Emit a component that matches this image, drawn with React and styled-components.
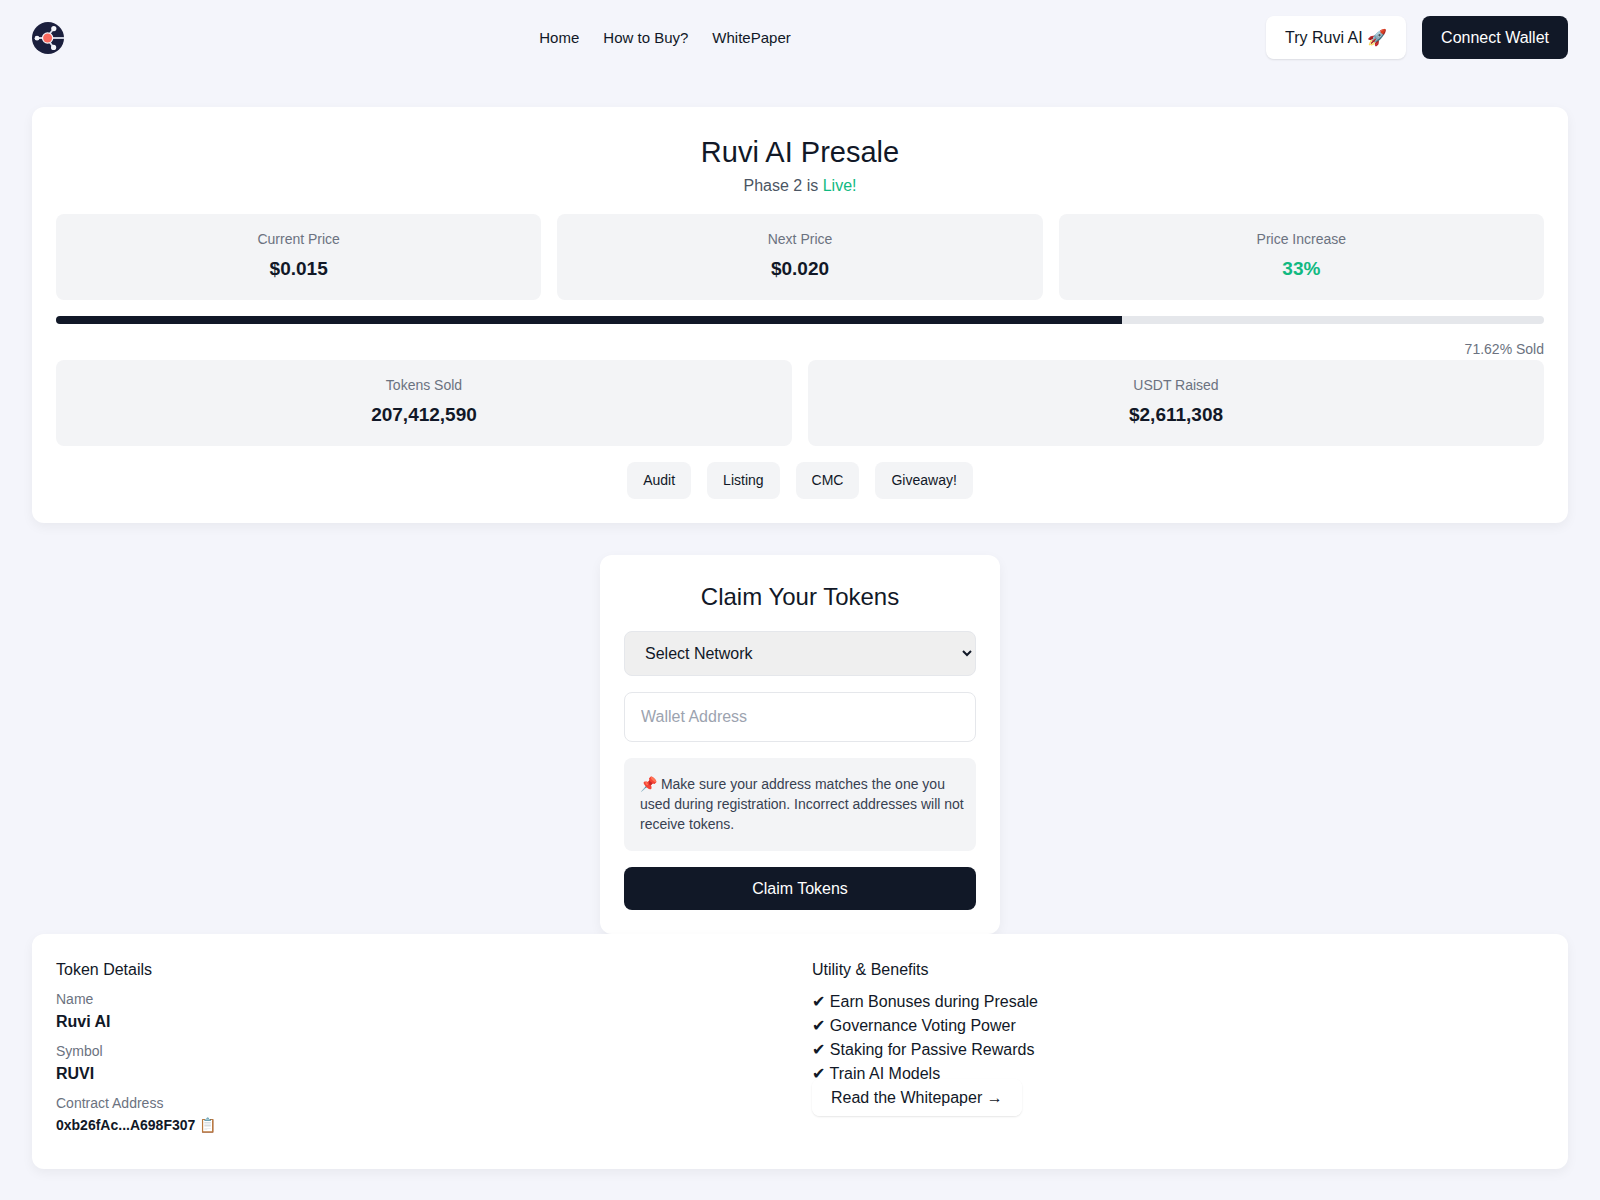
import React from 'react';
import styled, { createGlobalStyle } from 'styled-components';

const GlobalStyle = createGlobalStyle`
  *, *::before, *::after { box-sizing: border-box; }
  body {
    margin: 0;
    background: #f4f5fb;
    color: #111827;
    font-family: "Liberation Sans", Arial, sans-serif;
    font-size: 16px;
    line-height: 24px;
  }
  h1, h2, h3, p, ul, dl, dd { margin: 0; padding: 0; font-weight: 400; }
`;

const Page = styled.div`
  padding: 0 32px 32px;
`;

const Header = styled.header`
  display: flex;
  align-items: center;
  justify-content: space-between;
  padding: 16px 0;
  margin-bottom: 32px;
`;

const Logo = styled.svg`
  display: block;
  width: 32px;
  height: 32px;
`;

const Nav = styled.nav`
  display: flex;
  gap: 24px;
`;

const NavLink = styled.a`
  color: #111827;
  font-size: 15px;
  text-decoration: none;
`;

const Actions = styled.div`
  display: flex;
  gap: 16px;
`;

const Button = styled.button`
  padding: 10px 19px;
  border: 0;
  border-radius: 8px;
  background: ${(p) => (p.$dark ? '#111827' : '#ffffff')};
  color: ${(p) => (p.$dark ? '#ffffff' : '#111827')};
  box-shadow: ${(p) => (p.$dark ? 'none' : '0 1px 2px rgba(0, 0, 0, 0.1)')};
  font: inherit;
  line-height: 23px;
  text-decoration: none;
  cursor: pointer;
`;

const Arrow = styled.span`
  font-family: "Liberation Serif", serif;
`;

const Card = styled.section`
  padding: 24px;
  border-radius: 12px;
  background: #ffffff;
  box-shadow: 0 4px 12px rgba(0, 0, 0, 0.05);
`;

const PresaleCard = styled(Card)`
  margin-bottom: 32px;
  text-align: center;
`;

const Title = styled.h1`
  font-size: 29px;
  line-height: 43px;
`;

const Phase = styled.p`
  margin-bottom: 16px;
  color: #4b5563;
`;

const Green = styled.span`
  color: #10b981;
`;

const Stats = styled.div`
  display: grid;
  grid-template-columns: repeat(${(p) => p.$columns}, 1fr);
  gap: 16px;
  margin-bottom: 16px;
`;

const Stat = styled.div`
  padding: 16px;
  border-radius: 8px;
  background: #f3f4f6;
`;

const Label = styled.p`
  padding-bottom: 2px;
  color: #6b7280;
  font-size: 14px;
  line-height: 18px;
`;

const StatValue = styled.p`
  margin-top: 4px;
  color: ${(p) => (p.$green ? '#10b981' : '#111827')};
  font-size: 19px;
  font-weight: 700;
  line-height: 30px;
`;

const Track = styled.div`
  height: 8px;
  margin-bottom: 16px;
  border-radius: 4px;
  background: #e5e7eb;
  overflow: hidden;
`;

const Fill = styled.div`
  height: 100%;
  background: #111827;
`;

const Sold = styled(Label)`
  text-align: right;
`;

const Chips = styled.div`
  display: flex;
  flex-wrap: wrap;
  justify-content: center;
  gap: 16px;
`;

const Chip = styled.a`
  padding: 8px 16px;
  border-radius: 8px;
  background: #f3f4f6;
  color: #111827;
  font-size: 14px;
  line-height: 21px;
  text-decoration: none;
`;

const ClaimCard = styled(Card)`
  display: flex;
  flex-direction: column;
  gap: 16px;
  max-width: 400px;
  margin: 0 auto;
`;

const ClaimTitle = styled.h2`
  font-size: 24px;
  line-height: 36px;
  text-align: center;
`;

const Select = styled.select`
  width: 100%;
  height: 45px;
  padding: 0 16px;
  border: 1px solid #e5e7eb;
  border-radius: 8px;
  background-color: #efefef;
  color: #111827;
  font: inherit;
`;

const Input = styled.input`
  width: 100%;
  height: 50px;
  padding: 0 16px;
  border: 1px solid #e5e7eb;
  border-radius: 8px;
  background: #ffffff;
  color: #111827;
  font: inherit;

  &::placeholder { color: #9ca3af; }
`;

const Note = styled.p`
  padding: 16px 8px 17px 16px;
  border-radius: 8px;
  background: #f3f4f6;
  color: #374151;
  font-size: 14px;
  line-height: 20px;
`;

const DetailsCard = styled(Card)`
  display: grid;
  grid-template-columns: 1fr 1fr;
  gap: 24px;
`;

const SectionTitle = styled.h3`
  margin-bottom: 8px;
  font-size: 16px;
  line-height: 24px;
`;

const Detail = styled.div`
  margin-bottom: 8px;
`;

const DetailValue = styled.dd`
  font-size: ${(p) => (p.$small ? '14px' : '16px')};
  font-weight: 700;
  line-height: ${(p) => (p.$small ? '23px' : '24px')};
`;

const CopyButton = styled.button`
  padding: 0;
  border: 0;
  background: none;
  color: inherit;
  font: inherit;
  line-height: 20px;
  cursor: pointer;
`;

const Benefits = styled.ul`
  list-style: none;
`;

const Check = styled.span`
  font-family: "DejaVu Sans", sans-serif;
  font-weight: 700;
  line-height: 20px;
`;

const STATS = [
  { label: 'Current Price', value: '$0.015' },
  { label: 'Next Price', value: '$0.020' },
  { label: 'Price Increase', value: '33%', green: true },
];

const TOTALS = [
  { label: 'Tokens Sold', value: '207,412,590' },
  { label: 'USDT Raised', value: '$2,611,308' },
];

const BENEFITS = [
  'Earn Bonuses during Presale',
  'Governance Voting Power',
  'Staking for Passive Rewards',
  'Train AI Models',
];

const SOLD_PERCENT = 71.62;

function RuviLogo() {
  return (
    <Logo viewBox="0 0 32 32" role="img" aria-label="Ruvi AI">
      <circle cx="16" cy="16" r="16" fill="#1b1f3d" />
      <g stroke="#dfe2ee" strokeWidth="1.8" fill="none">
        <path d="M5 16H11" />
        <path d="M20 16H32" />
        <path d="M17.5 12L21.7 6.8" />
        <path d="M17.5 20L21.5 25.3" />
      </g>
      <g fill="#f5f6fb">
        <circle cx="5" cy="16.2" r="2.4" />
        <circle cx="21.8" cy="6.6" r="2.6" />
        <circle cx="21.6" cy="25.4" r="2.6" />
        <circle cx="15.6" cy="16" r="5.7" />
      </g>
      <circle cx="15.6" cy="16" r="4.5" fill="#fb6a5f" />
    </Logo>
  );
}

function StatGrid({ items }) {
  return (
    <Stats $columns={items.length}>
      {items.map((item) => (
        <Stat key={item.label}>
          <Label>{item.label}</Label>
          <StatValue $green={item.green}>{item.value}</StatValue>
        </Stat>
      ))}
    </Stats>
  );
}

export default function App() {
  return (
    <>
      <GlobalStyle />
      <Page>
        <Header>
          <RuviLogo />
          <Nav>
            <NavLink href="#home">Home</NavLink>
            <NavLink href="#how-to-buy">How to Buy?</NavLink>
            <NavLink href="#whitepaper">WhitePaper</NavLink>
          </Nav>
          <Actions>
            <Button type="button">Try Ruvi AI 🚀</Button>
            <Button type="button" $dark>Connect Wallet</Button>
          </Actions>
        </Header>
        <main>
          <PresaleCard>
            <Title>Ruvi AI Presale</Title>
            <Phase>Phase 2 is <Green>Live!</Green></Phase>
            <StatGrid items={STATS} />
            <Track>
              <Fill style={{ width: `${SOLD_PERCENT}%` }} />
            </Track>
            <Sold>{SOLD_PERCENT}% Sold</Sold>
            <StatGrid items={TOTALS} />
            <Chips>
              <Chip href="#audit">Audit</Chip>
              <Chip href="#listing">Listing</Chip>
              <Chip href="#cmc">CMC</Chip>
              <Chip href="#giveaway">Giveaway!</Chip>
            </Chips>
          </PresaleCard>
          <ClaimCard>
            <ClaimTitle>Claim Your Tokens</ClaimTitle>
            <Select aria-label="Network" defaultValue="">
              <option value="">Select Network</option>
            </Select>
            <Input type="text" aria-label="Wallet Address" placeholder="Wallet Address" />
            <Note>
              📌 Make sure your address matches the one you used during registration.
              Incorrect addresses will not receive tokens.
            </Note>
            <Button type="button" $dark>Claim Tokens</Button>
          </ClaimCard>
          <DetailsCard>
            <div>
              <SectionTitle>Token Details</SectionTitle>
              <dl>
                <Detail>
                  <Label as="dt">Name</Label>
                  <DetailValue>Ruvi AI</DetailValue>
                </Detail>
                <Detail>
                  <Label as="dt">Symbol</Label>
                  <DetailValue>RUVI</DetailValue>
                </Detail>
                <Detail>
                  <Label as="dt">Contract Address</Label>
                  <DetailValue $small>
                    0xb26fAc...A698F307 <CopyButton type="button" title="Copy">📋</CopyButton>
                  </DetailValue>
                </Detail>
              </dl>
            </div>
            <div>
              <SectionTitle>Utility &amp; Benefits</SectionTitle>
              <Benefits>
                {BENEFITS.map((benefit) => (
                  <li key={benefit}><Check>✔</Check> {benefit}</li>
                ))}
              </Benefits>
              <Button as="a" href="#whitepaper">Read the Whitepaper <Arrow>→</Arrow></Button>
            </div>
          </DetailsCard>
        </main>
      </Page>
    </>
  );
}
